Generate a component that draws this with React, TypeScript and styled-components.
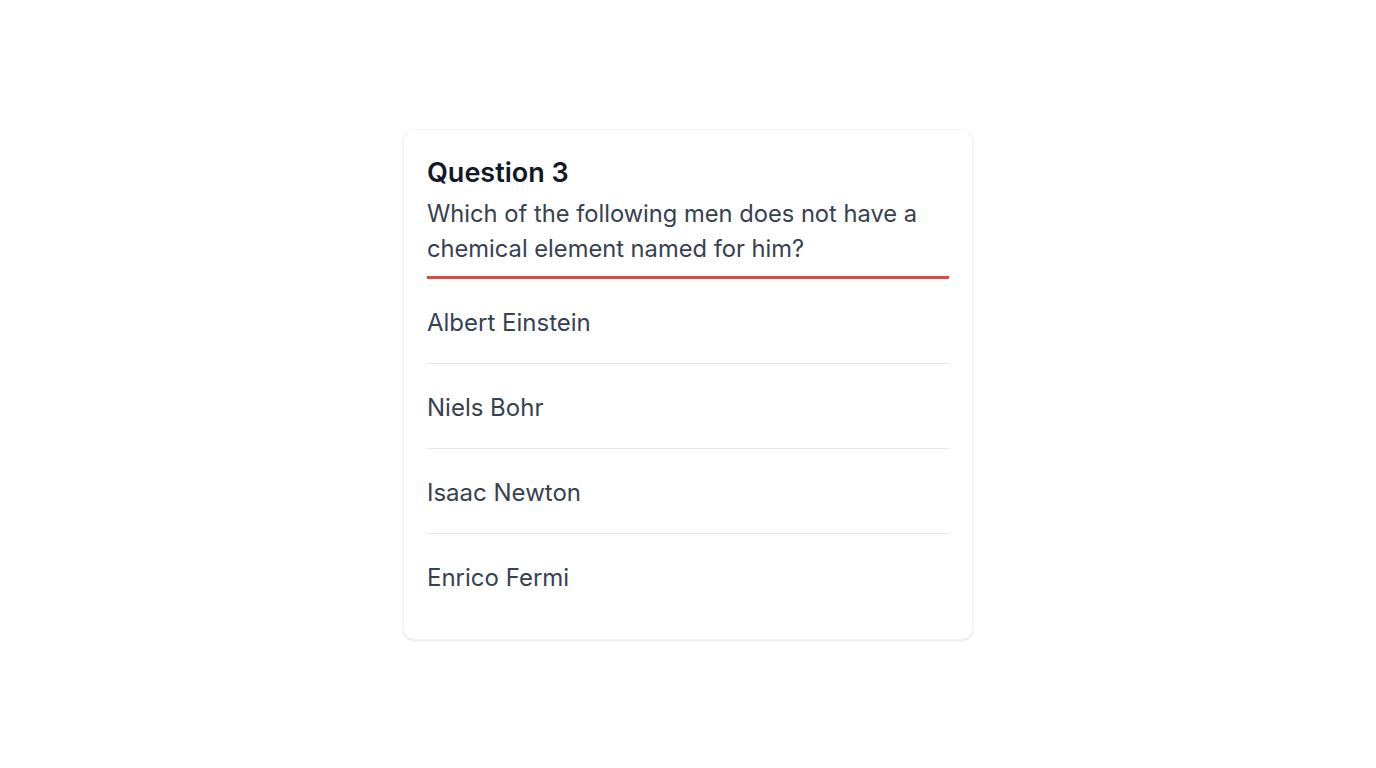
import React from "react";
import styled, { createGlobalStyle } from "styled-components";

const Global = createGlobalStyle`
  html, body { margin: 0; padding: 0; background: #ffffff; }
  body { font-family: Inter, "Noto Sans", sans-serif; }
  * { box-sizing: border-box; }
`;

const Page = styled.div`
  min-height: 100vh;
  display: flex;
  align-items: center;
  justify-content: center;
`;

const Card = styled.div`
  width: 570px;
  background: #ffffff;
  border-radius: 12px;
  box-shadow: 0 1px 3px rgba(0, 0, 0, 0.08), 0 1px 2px rgba(0, 0, 0, 0.04);
  border: 1px solid #f5f5f5;
  padding: 23px 23px 21px;
`;

const Title = styled.h2`
  margin: 0;
  font-size: 27px;
  line-height: 40px;
  font-weight: 600;
  color: #111827;
`;

const Prompt = styled.p`
  margin: 3px 0 0;
  font-size: 23.7px;
  line-height: 35px;
  color: #374151;
  padding-bottom: 10px;
  border-bottom: 3px solid #e0484b;
`;

const Options = styled.ul`
  list-style: none;
  margin: 0;
  padding: 0;
`;

const Option = styled.li`
  padding: 26px 0 22px;
  font-size: 24px;
  line-height: 36px;
  color: #374151;
  border-bottom: 1px solid #e5e7eb;
  &:last-child { border-bottom: none; }
`;

const options = ["Albert Einstein", "Niels Bohr", "Isaac Newton", "Enrico Fermi"];

export default function App() {
  return (
    <>
      <Global />
      <Page>
        <Card>
          <Title>Question 3</Title>
          <Prompt>Which of the following men does not have a chemical element named for him?</Prompt>
          <Options>
            {options.map((o) => (
              <Option key={o}>{o}</Option>
            ))}
          </Options>
        </Card>
      </Page>
    </>
  );
}
